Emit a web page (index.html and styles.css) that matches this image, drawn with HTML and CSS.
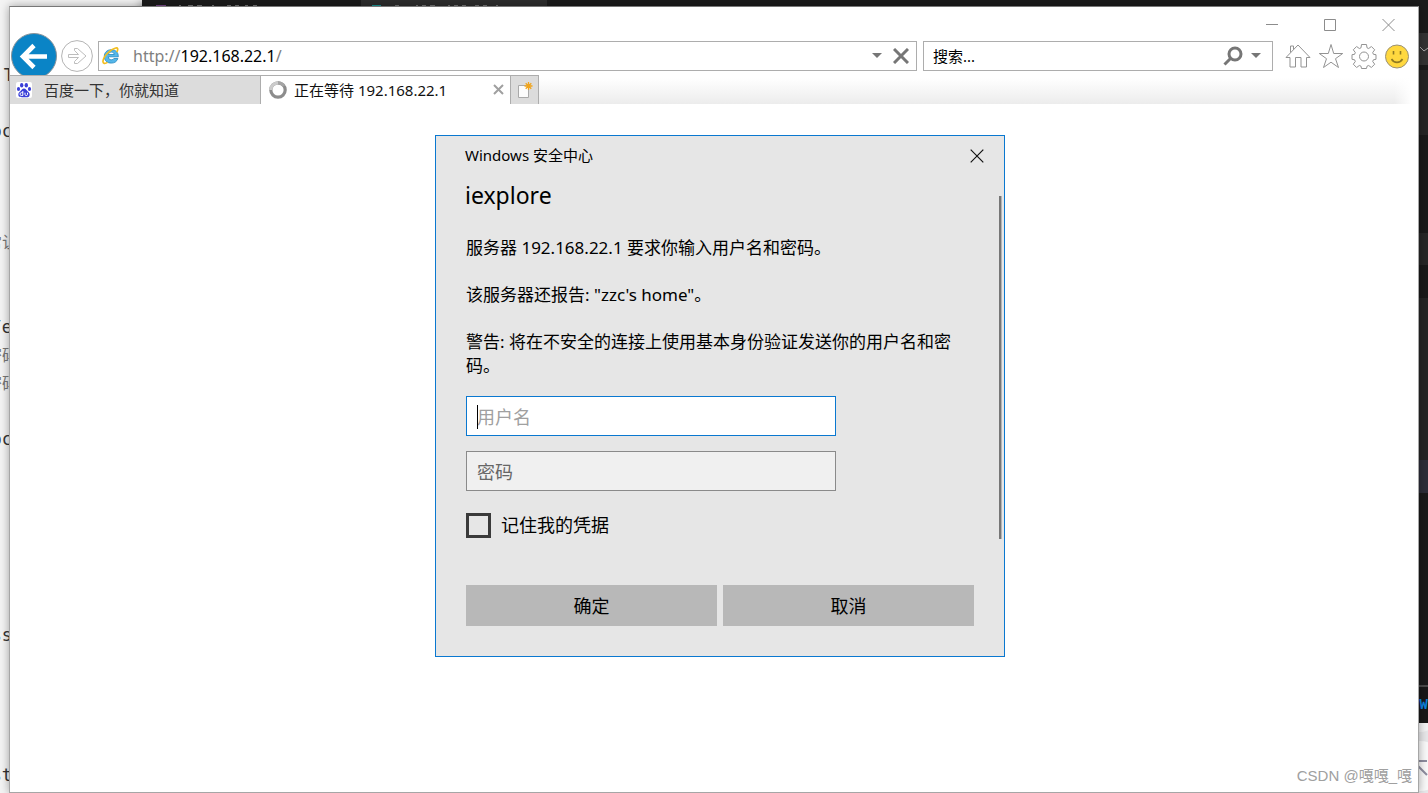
FILE: index.html
```html
<!DOCTYPE html>
<html lang="zh-CN">
<head>
<meta charset="utf-8">
<title>正在等待 192.168.22.1</title>
<meta name="viewport" content="width=device-width, initial-scale=1">
<link rel="stylesheet" href="styles.css">
</head>
<body>
<div class="desktop">
  <!-- windows lying behind the browser -->
  <div class="page-behind" aria-hidden="true">
    <span class="frag frag-1">T</span>
    <span class="frag frag-2">oc</span>
    <span class="frag frag-3 frag-cjk">常让</span>
    <span class="frag frag-4">/e</span>
    <span class="frag frag-5 frag-cjk">密码</span>
    <span class="frag frag-6 frag-cjk">密码</span>
    <span class="frag frag-7">oc</span>
    <span class="frag frag-8">ss</span>
    <span class="frag frag-9">st</span>
  </div>
  <div class="editor-behind" aria-hidden="true">
    <svg class="editor-tabs" width="420" height="6">
      <rect x="219" width="186" height="6" fill="#2d2d2d"/>
      <path fill="#7c4a8d" d="M14 5h10v1H14z"/>
      <path fill="#1b9a9a" d="M230 5h9v1h-9z"/>
      <path stroke="#777" d="M37 5.500h2m7 0h5m4 0h5m10 0h2m13 0h4m4 0h4m6 0h3m5 0h4M253 5.500h4m17 0h2m4 0h4m4 0h5m13 0h2m4 0h4m4 0h4m9 0h4m4 0h4m9 0h2"/>
    </svg>
    <div class="editor-edge">
      <svg class="editor-chevron" width="9" height="8" viewBox="0 0 9 8"><path d="M1 1l4 4 4-3" fill="none" stroke="#aaa"/></svg>
      <span class="editor-word">W</span>
    </div>
  </div>
  <div class="corner-behind" aria-hidden="true">
    <svg width="10" height="70" viewBox="0 0 10 70"><circle cx="2" cy="-9" r="18" fill="#f4f4f5"/><circle cx="2" cy="43" r="25" fill="#fafafa"/><path d="M0 38h9M0 43l9 9" stroke="#8e8ea0" stroke-width="2"/></svg>
  </div>

  <div class="browser">
    <header class="caption">
      <button class="caption-btn" aria-label="最小化"><svg width="13" height="13" viewBox="0 0 13 13"><path d="M0 6.500h12"/></svg></button>
      <button class="caption-btn" aria-label="最大化"><svg width="13" height="13" viewBox="0 0 13 13"><path d="M.5 1.500h11v11H.5z"/></svg></button>
      <button class="caption-btn" aria-label="关闭"><svg width="13" height="13" viewBox="0 0 13 13"><path d="M.5 1l12 12M12.500 1l-12 12"/></svg></button>
    </header>

    <nav class="toolbar">
      <button class="nav-back" aria-label="后退"><svg width="48" height="48" viewBox="0 0 48 48"><circle cx="24" cy="23" r="22.500" fill="#0a84c6" stroke="#8a9298"/><path d="M37 23.500H14M24 12.500l-11 11 11 11" fill="none" stroke="#fff" stroke-width="4.600"/></svg></button>
      <button class="nav-forward" aria-label="前进"><svg width="32" height="32" viewBox="0 0 32 32"><circle cx="16" cy="16" r="15.400" fill="#fff" stroke="#b4b4b4"/><path d="M7.500 14.500h10l-4-4V8.500h3l8.500 7.500-8.500 7.500h-3v-2l4-4h-10z" fill="#fff" stroke="#bdbdbd"/></svg></button>
      <div class="field address">
        <svg width="18" height="18" viewBox="0 0 18 18">
          <path d="M16.300 9.800H6.300c.2 2 1.300 3 3 3 1.200 0 2-.4 2.500-1.300h4.100c-1 3-3.300 4.600-6.600 4.600-4.300 0-7-2.600-7-6.600s2.700-6.800 7-6.800c4.400 0 7.200 2.800 7 7.100zM6.400 7.500h5.800c-.2-1.500-1.200-2.400-2.800-2.400s-2.700.9-3 2.400z" fill="#55b7ea" stroke="#2387bf" stroke-width=".8"/>
          <path d="M14.800 5c1.600-3 1-4.400-1-4C9 2 1.500 9 1 14c-.3 2.800 2 3 4.500 1.400" fill="none" stroke="#f3bd1c" stroke-width="1.700"/>
        </svg>
        <a class="url" href="#"><span class="url-dim">http://</span>192.168.22.1<span class="url-dim">/</span></a>
        <button class="icon-btn" aria-label="显示地址历史"><svg width="10" height="6" viewBox="0 0 10 6"><path d="M0 0h10L5 5z" fill="#767676"/></svg></button>
        <button class="icon-btn stop" aria-label="停止"><svg width="16" height="16" viewBox="0 0 16 16"><path d="M1 1l14 14M15 1L1 15" stroke="#767676" stroke-width="3"/></svg></button>
      </div>
      <div class="field search">
        <input class="search-input" type="text" aria-label="搜索" placeholder="搜索...">
        <button class="icon-btn" aria-label="搜索"><svg width="20" height="20" viewBox="0 0 20 20"><circle cx="12" cy="8" r="6" fill="none" stroke="#767676" stroke-width="3"/><path d="M8 12l-6.500 6.500" stroke="#767676" stroke-width="3"/></svg></button>
        <button class="icon-btn more" aria-label="搜索选项"><svg width="10" height="6" viewBox="0 0 10 6"><path d="M0 0h10L5 5z" fill="#767676"/></svg></button>
      </div>
      <div class="tools">
        <button class="icon-btn" aria-label="主页"><svg width="26" height="26" viewBox="0 0 26 26"><path d="M1 14.500L13 2l12 12.500h-3.500v9.500h-5.500v-9.500h-5.500v9.500H5v-9.500zM5.500 9.500V3h3v3.500" fill="none" stroke="#939393"/></svg></button>
        <button class="icon-btn" aria-label="收藏夹"><svg width="26" height="26" viewBox="0 0 26 26"><path d="M13 1.500l2.700 9h9l-7.200 5.200 3 8.800-7.500-5.300-7.500 5.300 3-8.800L1.300 10.500h9z" fill="none" stroke="#939393"/></svg></button>
        <button class="icon-btn" aria-label="工具"><svg width="26" height="26" viewBox="0 0 26 26"><path d="M10.500 1.500h5l.5 3.300 1.700.7 2.700-2 3.300 3.300-2 2.700.7 1.800 2.600.4v4.600l-2.600.5-.7 1.700 2 2.700-3.300 3.300-2.700-2-1.700.7-.5 2.300h-5l-.5-2.300-1.700-.7-2.700 2-3.300-3.300 2-2.700-.7-1.700L1 16.300v-4.600l2.600-.4.7-1.800-2-2.700 3.300-3.300 2.700 2 1.700-.7z" fill="none" stroke="#939393"/><circle cx="13" cy="13.500" r="4.500" fill="none" stroke="#939393"/></svg></button>
        <button class="icon-btn" aria-label="发送笑脸"><svg width="26" height="26" viewBox="0 0 26 26"><circle cx="13" cy="13.500" r="11.500" fill="#ffd83f" stroke="#9a9176"/><path d="M9.500 8v3.500M16.500 8v3.500" stroke="#907a22" stroke-width="1.600"/><path d="M7.500 16c2.500 4.500 8.500 4.500 11 0" fill="none" stroke="#907a22" stroke-width="1.600"/></svg></button>
      </div>
    </nav>

    <div class="tabs">
      <div class="tab">
        <svg width="16" height="16" viewBox="0 0 16 16"><rect width="16" height="16" rx="2" fill="#fff"/><g fill="#3a3fd8"><ellipse cx="5.700" cy="3.300" rx="1.700" ry="2.300"/><ellipse cx="10.300" cy="3.300" rx="1.700" ry="2.300"/><ellipse cx="2.500" cy="7" rx="1.600" ry="2.100"/><ellipse cx="13.500" cy="7" rx="1.600" ry="2.100"/><path d="M8 6.500c1.800 0 2.400 1.600 3.600 2.700 1.300 1.100 2.400 2 2 4-.4 2.300-2.600 2.300-5.600 2s-5.200.3-5.600-2c-.4-2 .7-2.900 2-4C5.600 8.100 6.200 6.500 8 6.500z"/></g><path d="M6.800 9v4.500H5.400a1.400 1.400 0 010-2.800h1.400M9 10.700v1.800c0 1.400 2.500 1.400 2.500 0v-1.800" fill="none" stroke="#fff"/></svg>
        <span class="tab-title">百度一下，你就知道</span>
      </div>
      <div class="tab tab-active">
        <svg width="18" height="18" viewBox="0 0 18 18" fill="none" stroke-width="3.200"><circle cx="9" cy="9" r="7.200" stroke="#8c8c8c"/><path d="M1.800 9A7.200 7.200 0 019 1.800" stroke="#ccc"/><path d="M9 1.800A7.200 7.200 0 0115 5" stroke="#a5a5a5"/></svg>
        <span class="tab-title">正在等待 192.168.22.1</span>
        <button class="icon-btn" aria-label="关闭选项卡"><svg width="11" height="11" viewBox="0 0 11 11"><path d="M1 1l9 9M10 1l-9 9" stroke="#a0a0a0" stroke-width="2"/></svg></button>
      </div>
      <button class="tab-new" aria-label="新建选项卡"><svg width="16" height="17" viewBox="0 0 16 17"><path d="M1.500 3.500h10v12h-10z" fill="#fcfcfc" stroke="#a9a9a9"/><path d="M11.500 0v8M7.500 4h8M8.700 1.200l5.600 5.600M14.300 1.200L8.700 6.800" stroke="#f0a41c" stroke-width="1.300"/></svg></button>
    </div>

    <main class="viewport">
      <form class="dialog" role="dialog" aria-label="Windows 安全中心">
        <div class="dialog-bar">
          <span class="dialog-caption">Windows 安全中心</span>
          <button class="icon-btn" type="button" aria-label="关闭"><svg width="14" height="14" viewBox="0 0 14 14"><path d="M.7.7l12.600 12.600M13.300.7L.7 13.300" stroke="#111" stroke-width="1.200"/></svg></button>
        </div>
        <h1 class="dialog-title">iexplore</h1>
        <div class="messages">
          <p class="message">服务器 192.168.22.1 要求你输入用户名和密码。</p>
          <p class="message">该服务器还报告: "zzc's home"。</p>
          <p class="message">警告: 将在不安全的连接上使用基本身份验证发送你的用户名和密码。</p>
        </div>
        <div class="inputs">
          <label class="entry entry-focus"><input class="entry-input" type="text" aria-label="用户名" placeholder="用户名"></label>
          <label class="entry"><input class="entry-input" type="password" aria-label="密码" placeholder="密码"></label>
        </div>
        <label class="remember"><input class="remember-box" type="checkbox">记住我的凭据</label>
        <div class="actions">
          <button class="action" type="button">确定</button>
          <button class="action" type="button">取消</button>
        </div>
        <div class="scroll-thumb"></div>
      </form>
      <span class="watermark">CSDN @嘎嘎_嘎</span>
    </main>
  </div>
</div>
</body>
</html>
```
FILE: styles.css
```css
* { box-sizing: border-box; }

body {
  margin: 0;
  font-family: "Noto Sans", "Noto Sans CJK SC", sans-serif;
  font-size: 15px;
  color: #000;
}

button {
  margin: 0;
  padding: 0;
  border: 0;
  background: none;
  font: inherit;
  color: inherit;
}

input { font: inherit; color: inherit; }
svg { display: block; flex: none; }

.desktop {
  position: relative;
  display: flex;
  height: 100vh;
  padding: 6px 9px 0 9px;
  overflow: hidden;
  background: #f4f4f4;
}

/* things behind the browser window */
.page-behind {
  position: absolute;
  inset: 0 auto 0 0;
  width: 12px;
  overflow: hidden;
}

.frag {
  position: absolute;
  right: 0;
  font: 17px/20px "DejaVu Sans Mono", monospace;
  white-space: nowrap;
  color: #333;
}

.frag-cjk { right: -6px; font: 16px/20px "Noto Sans CJK SC", sans-serif; color: #777; }
.frag-1 { top: 65px; right: -2px; }
.frag-2 { top: 121px; }
.frag-3 { top: 231px; }
.frag-4 { top: 317px; }
.frag-5 { top: 344px; }
.frag-6 { top: 372px; }
.frag-7 { top: 429px; }
.frag-8 { top: 625px; }
.frag-9 { top: 765px; }

.editor-behind {
  position: absolute;
  inset: 0 0 auto 142px;
  height: 723px;
  background: #1b1b1b;
  box-shadow: 0 2px 10px rgba(0, 0, 0, .5);
}

.editor-edge {
  position: absolute;
  inset: 0 0 0 auto;
  width: 10px;
  overflow: hidden;
  background: linear-gradient(#1b1b1b 33px, #333 33px 65px, #1b1b1b 65px 70px, #252525 70px 135px, #1a1a1a 135px 233px, #272727 233px 265px, #1a1a1a 265px 298px, #252525 298px 460px, #2c2d38 460px 493px, #1a1a1a 493px 685px, #4a4a4a 685px 687px, #181818 687px);
}

.editor-chevron { position: absolute; top: 46px; right: 0; }

.editor-word {
  position: absolute;
  top: 695px;
  right: 0;
  font: bold 14px/20px "Liberation Mono", monospace;
  color: #0a84e0;
}

.corner-behind {
  position: absolute;
  inset: 723px 0 auto auto;
  background: #e8e8ea;
}

/* browser window */
.browser {
  position: relative;
  display: flex;
  flex: 1;
  flex-direction: column;
  min-width: 0;
  border: 1px solid #a6a6a6;
  border-top-color: #777;
  background: #fff;
  box-shadow: 0 0 9px rgba(0, 0, 0, .35);
}

.caption {
  display: flex;
  justify-content: flex-end;
  height: 26px;
  padding-right: 1px;
}

.caption-btn {
  display: flex;
  align-items: flex-end;
  justify-content: center;
  width: 58px;
  padding-bottom: 2px;
}

.caption-btn svg { fill: none; stroke: #8c8c8c; }

.toolbar {
  display: flex;
  align-items: flex-start;
  height: 42px;
  overflow: hidden;
}

.nav-forward { margin: 7px 5px 0 3px; }

.field {
  display: flex;
  align-items: center;
  min-width: 0;
  height: 30px;
  margin-top: 8px;
  border: 1px solid #adadad;
  background: #fff;
}

.icon-btn {
  display: flex;
  flex: none;
  align-items: center;
  justify-content: center;
}

.address { flex: 1; padding: 0 7px 0 3px; }

.url {
  flex: 1;
  min-width: 0;
  margin-left: 13px;
  overflow: hidden;
  font-size: 16px;
  line-height: 24px;
  white-space: nowrap;
  color: #000;
  text-decoration: none;
}

.url-dim { color: #808080; }
.stop { margin-left: 11px; }

.search { flex: 0 1 350px; margin-left: 6px; padding: 0 11px 0 9px; }

.search-input {
  flex: 1;
  min-width: 0;
  padding: 0;
  border: 0;
  outline: 0;
  background: none;
}

.search-input::placeholder { color: #000; opacity: 1; }
.more { margin-left: 8px; }

.tools {
  display: flex;
  gap: 7px;
  margin: 10px 8px 0 12px;
}

.tabs {
  display: flex;
  height: 29px;
  background: linear-gradient(90deg, transparent calc(100% - 24px), #fff calc(100% - 6px)), linear-gradient(#fff 3px, #ececec);
}

.tab {
  display: flex;
  align-items: center;
  flex: 0 1 250px;
  min-width: 0;
  padding: 0 6px 1px;
  border-top: 1px solid #adadad;
  background: #dcdcdc;
  color: #333;
}

.tab-active {
  padding: 0 6px 1px 8px;
  border-left: 1px solid #adadad;
  background: #fff;
  color: #111;
}

.tab-title {
  flex: 1;
  margin-left: 12px;
  overflow: hidden;
  white-space: nowrap;
}

.tab-active .tab-title { margin-left: 7px; }

.tab-new {
  display: flex;
  align-items: center;
  justify-content: center;
  width: 29px;
  border: 1px solid #adadad;
  border-bottom: 0;
  background: #dcdcdc;
}

/* page area */
.viewport {
  position: relative;
  display: flex;
  flex: 1;
  align-items: flex-start;
  justify-content: center;
  padding: 31px 0 0 12px;
}

.dialog {
  position: relative;
  width: 570px;
  max-width: 100%;
  padding: 0 30px 30px;
  border: 1px solid #0a78d0;
  background: #e6e6e6;
}

.dialog-bar {
  display: flex;
  align-items: center;
  justify-content: space-between;
  height: 40px;
  margin: 0 -10px 1px -1px;
}

.dialog-caption { padding-bottom: 3px; }
.dialog-bar .icon-btn { width: 14px; }

.dialog-title {
  margin: 0 0 23px -1px;
  font-size: 23px;
  font-weight: 400;
  line-height: 36px;
}

.messages {
  display: flex;
  flex-direction: column;
  gap: 23px;
}

.message {
  margin: 0;
  font-size: 17px;
  line-height: 24px;
}

.inputs {
  display: flex;
  flex-direction: column;
  gap: 15px;
  width: 370px;
  max-width: 100%;
  margin-top: 18px;
}

.entry { position: relative; display: flex; }

.entry-input {
  flex: 1;
  min-width: 0;
  height: 40px;
  padding: 2px 10px 0;
  border: 1px solid #8a8a8a;
  border-radius: 0;
  outline: 0;
  background: #f0f0f0;
  font-size: 18px;
}

.entry-input::placeholder { color: #666; opacity: 1; }
.entry-focus .entry-input { border-color: #0a78d0; background: #fff; }
.entry-focus .entry-input::placeholder { color: #a0a0a0; }

/* text caret of the focused box */
.entry-focus::before {
  content: "";
  position: absolute;
  top: 9px;
  left: 11px;
  width: 1px;
  height: 24px;
  background: #000;
}

.remember {
  display: flex;
  align-items: center;
  gap: 10px;
  margin-top: 22px;
  font-size: 18px;
  line-height: 25px;
}

.remember-box {
  appearance: none;
  width: 25px;
  height: 25px;
  margin: 0;
  border: 3px solid #3a3a3a;
}

.actions {
  display: flex;
  gap: 6px;
  margin-top: 47px;
}

.action {
  flex: 1;
  height: 41px;
  padding-bottom: 2px;
  background: #b8b8b8;
  font-size: 18px;
}

.scroll-thumb {
  position: absolute;
  top: 60px;
  right: 2px;
  width: 3px;
  height: 343px;
  border-right: 1px solid #b4b4b4;
  background: #767676;
}

.watermark {
  position: absolute;
  right: 6px;
  bottom: 5px;
  font: 15px/22px "Liberation Sans", "Noto Sans CJK SC", sans-serif;
  color: #a0a0a0;
}
```
